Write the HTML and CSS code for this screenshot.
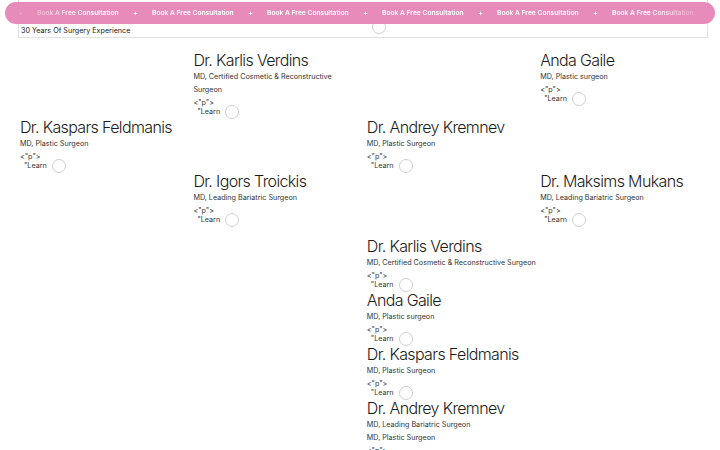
FILE: index.html
```html
<!DOCTYPE html>
<html lang="en">
<head>
<meta charset="utf-8">
<title>Our Surgeons</title>
<link rel="stylesheet" href="styles.css">
</head>
<body>
  <div class="promo">
    <div class="promo-track">
      <span class="plus">+</span><span class="promo-text">Book A Free Consultation</span>
      <span class="plus">+</span><span class="promo-text">Book A Free Consultation</span>
      <span class="plus">+</span><span class="promo-text">Book A Free Consultation</span>
      <span class="plus">+</span><span class="promo-text">Book A Free Consultation</span>
      <span class="plus">+</span><span class="promo-text">Book A Free Consultation</span>
      <span class="plus">+</span><span class="promo-text">Book A Free Consultation</span>
    </div>
  </div>

  <header class="intro">
    <span class="intro-text">30 Years Of Surgery Experience</span>
    <span class="ring intro-ring"></span>
  </header>

  <main class="team">
    <article class="doc c2 r1">
      <h2 class="name">Dr. Karlis Verdins</h2>
      <p class="role">MD, Certified Cosmetic &amp; Reconstructive Surgeon</p>
      <div class="tag">&lt;"p"&gt;</div>
      <div class="learn"><span class="learn-text">"Learn</span><span class="ring"></span></div>
    </article>
    <article class="doc c4 r1">
      <h2 class="name">Anda Gaile</h2>
      <p class="role">MD, Plastic surgeon</p>
      <div class="tag">&lt;"p"&gt;</div>
      <div class="learn"><span class="learn-text">"Learn</span><span class="ring"></span></div>
    </article>
    <article class="doc c1 r2">
      <h2 class="name">Dr. Kaspars Feldmanis</h2>
      <p class="role">MD, Plastic Surgeon</p>
      <div class="tag">&lt;"p"&gt;</div>
      <div class="learn"><span class="learn-text">"Learn</span><span class="ring"></span></div>
    </article>
    <article class="doc c3 r2">
      <h2 class="name">Dr. Andrey Kremnev</h2>
      <p class="role">MD, Plastic Surgeon</p>
      <div class="tag">&lt;"p"&gt;</div>
      <div class="learn"><span class="learn-text">"Learn</span><span class="ring"></span></div>
    </article>
    <article class="doc c2 r3">
      <h2 class="name">Dr. Igors Troickis</h2>
      <p class="role">MD, Leading Bariatric Surgeon</p>
      <div class="tag">&lt;"p"&gt;</div>
      <div class="learn"><span class="learn-text">"Learn</span><span class="ring"></span></div>
    </article>
    <article class="doc c4 r3">
      <h2 class="name">Dr. Maksims Mukans</h2>
      <p class="role">MD, Leading Bariatric Surgeon</p>
      <div class="tag">&lt;"p"&gt;</div>
      <div class="learn"><span class="learn-text">"Learn</span><span class="ring"></span></div>
    </article>

    <div class="stack c3 r4">
      <article class="doc wide">
        <h2 class="name">Dr. Karlis Verdins</h2>
        <p class="role">MD, Certified Cosmetic &amp; Reconstructive Surgeon</p>
        <div class="tag">&lt;"p"&gt;</div>
        <div class="learn"><span class="learn-text">"Learn</span><span class="ring"></span></div>
      </article>
      <article class="doc wide">
        <h2 class="name">Anda Gaile</h2>
        <p class="role">MD, Plastic surgeon</p>
        <div class="tag">&lt;"p"&gt;</div>
        <div class="learn"><span class="learn-text">"Learn</span><span class="ring"></span></div>
      </article>
      <article class="doc wide">
        <h2 class="name">Dr. Kaspars Feldmanis</h2>
        <p class="role">MD, Plastic Surgeon</p>
        <div class="tag">&lt;"p"&gt;</div>
        <div class="learn"><span class="learn-text">"Learn</span><span class="ring"></span></div>
      </article>
      <article class="doc wide">
        <h2 class="name">Dr. Andrey Kremnev</h2>
        <p class="role">MD, Leading Bariatric Surgeon</p>
        <p class="role">MD, Plastic Surgeon</p>
        <div class="tag">&lt;"p"&gt;</div>
        <div class="learn"><span class="learn-text">"Learn</span><span class="ring"></span></div>
      </article>
    </div>
  </main>
</body>
</html>
```

FILE: styles.css
```css
* {
  box-sizing: border-box;
}

html, body {
  margin: 0;
  padding: 0;
  background: #ffffff;
  overflow: hidden;
}

body {
  font-family: Inter, "Noto Sans", sans-serif;
  color: #222;
  width: 720px;
  height: 450px;
  position: relative;
}

/* floating consultation ribbon */
.promo {
  position: absolute;
  left: 5px;
  top: 2px;
  width: 710px;
  height: 22px;
  border-radius: 11px;
  background: #e78bba;
  overflow: hidden;
  z-index: 5;
}

.promo-track {
  display: flex;
  align-items: center;
  height: 100%;
  padding-left: 13px;
  white-space: nowrap;
  color: #fff;
  font-size: 6.7px;
  font-weight: 600;
  -webkit-mask-image: linear-gradient(to right, transparent 0, rgba(0,0,0,.2) 2%, rgba(0,0,0,.5) 6%, #000 11%, #000 91%, rgba(0,0,0,.35) 96%, transparent 99%);
  mask-image: linear-gradient(to right, transparent 0, rgba(0,0,0,.2) 2%, rgba(0,0,0,.5) 6%, #000 11%, #000 91%, rgba(0,0,0,.35) 96%, transparent 99%);
}

.plus {
  flex: none;
  width: 5px;
  text-align: center;
  margin-right: 14px;
}

.promo-text {
  flex: none;
  width: 81px;
  margin-right: 15px;
}

/* intro strip */
.intro {
  margin-left: 18px;
  width: 690px;
  height: 38px;
  border: 1px solid #e2e2e2;
  border-top: none;
  padding: 25px 0 0 2px;
  display: flex;
  align-items: center;
  font-size: 7.2px;
  line-height: 12px;
  color: #222;
}

.intro .intro-ring {
  align-self: flex-start;
  margin-left: 242px;
  margin-top: -5px;
}

/* surgeon grid */
.team {
  display: grid;
  grid-template-columns: repeat(4, 173.4px);
  margin: 12px 0 0 20px;
  align-items: start;
}

.c1 { grid-column: 1; }
.c2 { grid-column: 2; }
.c3 { grid-column: 3; }
.c4 { grid-column: 4; }
.r1 { grid-row: 1; }
.r2 { grid-row: 2; }
.r3 { grid-row: 3; }
.r4 { grid-row: 4; }

.doc {
  padding-right: 12px;
}

.doc.wide {
  padding-right: 0;
  white-space: nowrap;
}

.stack {
  padding-top: 11px;
}

.name {
  margin: 0;
  font-size: 16px;
  font-weight: 300;
  letter-spacing: -0.04em;
  line-height: 20px;
  color: #1b1b1b;
  white-space: nowrap;
}

.role {
  margin: 0;
  font-size: 7.2px;
  line-height: 13px;
  color: #333;
}

.tag {
  font-size: 7.2px;
  line-height: 13px;
  color: #333;
}

.learn {
  display: flex;
  align-items: flex-start;
  height: 8px;
  padding-left: 4px;
  font-size: 7.2px;
  color: #333;
}

.learn-text {
  line-height: 5px;
}

.ring {
  display: inline-block;
  flex: none;
  width: 14px;
  height: 14px;
  border-radius: 50%;
  border: 1px solid #cfcfcf;
  background: #fff;
}

.learn .ring {
  margin-left: 5px;
  margin-top: -4px;
}
```
